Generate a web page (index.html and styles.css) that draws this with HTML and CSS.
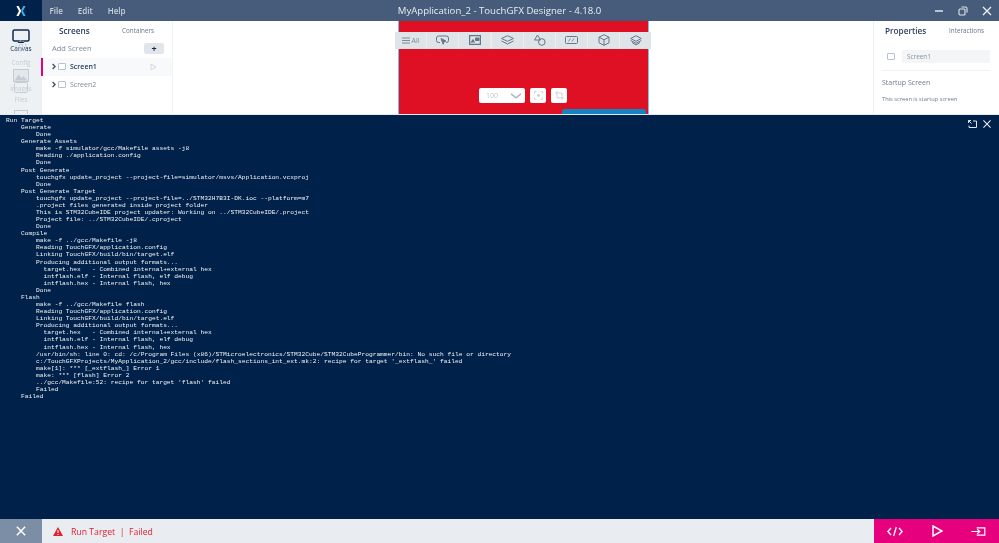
FILE: index.html
```html
<!DOCTYPE html>
<html lang="en">
<head>
<meta charset="utf-8">
<title>MyApplication_2 - TouchGFX Designer - 4.18.0</title>
<link rel="stylesheet" href="styles.css">
</head>
<body>
<div class="app">
  <header class="titlebar">
    <div class="logo">
      <svg width="10" height="12" viewBox="0 0 14 15"><path d="M0.500 0.500h3.200l3.600 7-3.600 7H0.500l3.600-7z" fill="#fff"/><path d="M13.500 0.500h-3.200l-3 5.600 1.600 2.900z" fill="#3fb4e6"/><path d="M13.500 14.500h-3.200l-3-5.600 1.600-2.900z" fill="#3fb4e6"/></svg>
    </div>
    <nav class="menu"><span>File</span><span>Edit</span><span>Help</span></nav>
    <div class="title">MyApplication_2 - TouchGFX Designer - 4.18.0</div>
    <div class="winbtns">
      <svg width="10" height="10" viewBox="0 0 10 10"><path d="M1 5h8" stroke="#dfe5ec" stroke-width="1.500"/></svg>
      <svg width="10" height="10" viewBox="0 0 10 10" fill="none" stroke="#dfe5ec" stroke-width="1.100"><rect x="1" y="3" width="6" height="6" rx="1"/><path d="M3.500 1h4a1.500 1.500 0 0 1 1.500 1.500v4"/></svg>
      <svg width="10" height="10" viewBox="0 0 10 10"><path d="M1 1l8 8M9 1l-8 8" stroke="#eef1f5" stroke-width="1.300"/></svg>
    </div>
  </header>

  <div class="workspace">
    <aside class="rail">
      <div class="rail-item active">
        <svg width="18" height="14" viewBox="0 0 18 14" fill="none" stroke="#0d2a50" stroke-width="1.500"><rect x="1" y="1" width="16" height="11" rx="1.500"/><path d="M6 13.300h6"/></svg>
        <span>Canvas</span>
      </div>
      <div class="rail-item config">
        <svg width="14" height="14" viewBox="0 0 14 14" fill="none" stroke="#c4ccd5"><circle cx="7" cy="7" r="5" stroke-dasharray="2.500 1"/><circle cx="7" cy="7" r="2"/></svg>
        <span>Config</span>
      </div>
      <div class="rail-item images">
        <svg width="16" height="13" viewBox="0 0 16 13"><rect x="0.500" y="0.500" width="15" height="12" fill="#e4e8ec" stroke="#c4ccd5"/><path d="M1.500 11.500l4-6 3 3.500 2-2 4 4.500z" fill="#c4ccd5"/></svg>
        <span>Images</span>
      </div>
      <div class="rail-item files">
        <svg width="14" height="11" viewBox="0 0 14 11" fill="none" stroke="#c4ccd5"><rect x="0.500" y="0.500" width="13" height="10" rx="1"/></svg>
        <span>Files</span>
      </div>
      <div class="rail-item more">
        <svg width="14" height="5" viewBox="0 0 14 5" fill="none" stroke="#c4ccd5"><rect x="0.500" y="0.500" width="13" height="8"/></svg>
      </div>
    </aside>

    <section class="screens">
      <div class="tabs"><span class="tab-on">Screens</span><span class="tab-off">Containers</span></div>
      <div class="add-row"><span>Add Screen</span><span class="add-btn">+</span></div>
      <div class="screen-row selected">
        <svg class="chev" width="5" height="7" viewBox="0 0 5 7" fill="none" stroke="#33475f" stroke-width="1.200"><path d="M.6 1l2.500 2.500L.6 6"/></svg>
        <span class="box"></span><span class="name">Screen1</span>
        <svg class="play" width="7" height="8" viewBox="0 0 7 8" fill="none" stroke="#d3d9e0"><path d="M1 1l5 3-5 3z"/></svg>
      </div>
      <div class="screen-row">
        <svg class="chev" width="5" height="7" viewBox="0 0 5 7" fill="none" stroke="#33475f" stroke-width="1.200"><path d="M.6 1l2.500 2.500L.6 6"/></svg>
        <span class="box"></span><span class="name">Screen2</span>
      </div>
    </section>

    <main class="canvas">
      <div class="device">
        <div class="scrollbtn"></div>
        <div class="zoombar">
          <span class="zoom-select"><span>100</span><svg width="12" height="6" viewBox="0 0 12 6" fill="none" stroke="#aeb7c2" stroke-width="1.500"><path d="M1 .8l5 4 5-4"/></svg></span>
          <span class="zoom-btn"><svg width="9" height="9" viewBox="0 0 11 11" fill="none" stroke="#c3cad3"><path d="M.5 3V.5H3M8 .5h2.500V3M10.500 8v2.500H8M3 10.500H.5V8"/><circle cx="5.500" cy="5.500" r="1.200" fill="#c3cad3"/></svg></span>
          <span class="zoom-btn"><svg width="9" height="9" viewBox="0 0 11 11" fill="none" stroke="#c3cad3"><path d="M2.500 0v8.500H11M0 2.500h8.500V11"/></svg></span>
        </div>
      </div>
      <div class="toolbar">
        <span class="tool all"><svg width="8" height="7" viewBox="0 0 8 7" stroke="#7d8a99"><path d="M0 1h8M0 3.500h8M0 6h8"/></svg>All</span>
        <span class="tool"><svg width="13" height="11" viewBox="0 0 13 11" fill="none" stroke="#66768a"><path d="M4 7.500H2.500a2 2 0 0 1-2-2V3a2 2 0 0 1 2-2h8a2 2 0 0 1 2 2v2.500a2 2 0 0 1-2 2H10"/><path d="M5 3.500l5 2.500-2 .8-.8 2.500z" fill="#66768a"/></svg></span>
        <span class="tool"><svg width="12" height="10" viewBox="0 0 12 10" fill="none" stroke="#66768a"><rect x=".5" y=".5" width="11" height="9" stroke-width="1.500"/><path d="M2 7.500l2-3 1.500 3M6.500 3h3.500v2.500H6.500z" fill="#66768a"/></svg></span>
        <span class="tool"><svg width="13" height="11" viewBox="0 0 13 11" fill="none" stroke="#66768a"><path d="M6.500.7l6 2.800-6 2.800-6-2.800z"/><path d="M.5 6l6 3 6-3"/></svg></span>
        <span class="tool"><svg width="13" height="12" viewBox="0 0 13 12" fill="none" stroke="#66768a"><path d="M4.500 1L7.500 6h-6z"/><circle cx="8.800" cy="8" r="3.300"/></svg></span>
        <span class="tool"><svg width="13" height="8" viewBox="0 0 13 8" fill="none" stroke="#66768a"><rect x=".5" y=".5" width="12" height="7" rx="1"/><path d="M3.500 5.500l2-3M7 5.500l2-3" stroke-width=".8"/></svg></span>
        <span class="tool"><svg width="12" height="12" viewBox="0 0 12 12" fill="none" stroke="#66768a"><path d="M6 .7l5 2.500v5.600l-5 2.500-5-2.500V3.200zM1 3.200l5 2.600 5-2.600M6 5.800v5.500"/></svg></span>
        <span class="tool"><svg width="12" height="11" viewBox="0 0 12 11" fill="none" stroke="#66768a"><path d="M6 .7l5.300 2.800L6 6.300.7 3.500z"/><path d="M.7 5.500L6 8.300l5.300-2.800M2 7.500L6 10l4-2.500"/></svg></span>
      </div>
    </main>

    <aside class="props">
      <div class="tabs props-tabs"><span class="tab-on">Properties</span><span class="tab-off">Interactions</span></div>
      <div class="prop-name">
        <span class="box"></span><span class="prop-input">Screen1</span>
      </div>
      <h3 class="prop-h">Startup Screen</h3>
      <p class="prop-p">This screen is startup screen</p>
    </aside>
  </div>

  <section class="console">
    <div class="console-btns">
      <svg width="9" height="8" viewBox="0 0 9 8" fill="none" stroke="#dfe5ec"><path d="M3 .5H.5V3M.5.5l3 3M5 1h3.500v6.500H1V5.500"/></svg>
      <svg width="8" height="8" viewBox="0 0 9 9"><path d="M.5.5l8 8M8.500.5l-8 8" stroke="#eef1f5" stroke-width="1.200"/></svg>
    </div>
<pre class="log">Run Target
    Generate
        Done
    Generate Assets
        make -f simulator/gcc/Makefile assets -j8
        Reading ./application.config
        Done
    Post Generate
        touchgfx update_project --project-file=simulator/msvs/Application.vcxproj
        Done
    Post Generate Target
        touchgfx update_project --project-file=../STM32H7B3I-DK.ioc --platform=m7
        .project files generated inside project folder
        This is STM32CubeIDE project updater: Working on ../STM32CubeIDE/.project
        Project file: ../STM32CubeIDE/.cproject
        Done
    Compile
        make -f ../gcc/Makefile -j8
        Reading TouchGFX/application.config
        Linking TouchGFX/build/bin/target.elf
        Producing additional output formats...
          target.hex   - Combined internal+external hex
          intflash.elf - Internal flash, elf debug
          intflash.hex - Internal flash, hex
        Done
    Flash
        make -f ../gcc/Makefile flash
        Reading TouchGFX/application.config
        Linking TouchGFX/build/bin/target.elf
        Producing additional output formats...
          target.hex   - Combined internal+external hex
          intflash.elf - Internal flash, elf debug
          intflash.hex - Internal flash, hex
        /usr/bin/sh: line 0: cd: /c/Program Files (x86)/STMicroelectronics/STM32Cube/STM32CubeProgrammer/bin: No such file or directory
        c:/TouchGFXProjects/MyApplication_2/gcc/include/flash_sections_int_ext.mk:2: recipe for target '_extflash_' failed
        make[1]: *** [_extflash_] Error 1
        make: *** [flash] Error 2
        ../gcc/Makefile:52: recipe for target 'flash' failed
        Failed
    Failed</pre>
  </section>

  <footer class="statusbar">
    <button class="close-btn" type="button" aria-label="Close"><svg width="10" height="10" viewBox="0 0 12 12"><path d="M1 1l10 10M11 1L1 11" stroke="#fff" stroke-width="1.800"/></svg></button>
    <div class="status">
      <svg width="10" height="9" viewBox="0 0 10 9"><path d="M5 0l5 9H0z" fill="#e0202f"/><path d="M5 3v3M5 7v1" stroke="#fff"/></svg>
      <span>Run Target&nbsp; |&nbsp; Failed</span>
    </div>
    <div class="actions">
      <svg width="16" height="11" viewBox="0 0 18 12" fill="none" stroke="#fff" stroke-width="1.500"><path d="M4.500 2L1 6l3.500 4M13.500 2L17 6l-3.500 4M10.500 1L7.500 11"/></svg>
      <svg width="11" height="12" viewBox="0 0 11 12" fill="none" stroke="#fff" stroke-width="1.500"><path d="M1 1l9 5-9 5z"/></svg>
      <svg width="15" height="9" viewBox="0 0 16 10" fill="none" stroke="#fff" stroke-width="1.300"><path d="M6 1h9v8H6M0 5h9M6.500 2.500L9.500 5l-3 2.500"/></svg>
    </div>
  </footer>
</div>
</body>
</html>
```

FILE: styles.css
```css
* { box-sizing: border-box; }
html, body { margin: 0; height: 100%; overflow: hidden; }
body { font-family: "Open Sans", sans-serif; color: #33475f; background: #fff; }
svg { flex: none; }

/* own compositing layer: text is antialiased in greyscale, as in the reference */
.app { display: flex; flex-direction: column; width: 999px; height: 543px; will-change: transform; }

/* Title bar */
.titlebar { position: relative; display: flex; align-items: center; flex: 0 0 21px; background: #475c7b; color: #dfe5ec; }
.logo { display: flex; align-items: center; justify-content: center; width: 42px; height: 21px; background: #00214a; }
.menu { display: flex; gap: 15px; margin-left: 7.500px; font-size: 8px; font-weight: 600; color: #c9d2dd; }
.title { position: absolute; left: 0; right: 0; text-align: center; font-size: 9.600px; font-weight: 500; color: #e8ecf1; }
.winbtns { display: flex; gap: 14px; margin-left: auto; margin-right: 7px; }

/* Workspace */
.workspace { display: flex; flex: 0 0 94px; overflow: hidden; background: #fff; border-bottom: 1px solid #e6e9ed; }

.rail { flex: 0 0 42px; display: flex; flex-direction: column; align-items: center; padding-top: 8px; background: #eef1f4; overflow: hidden; }
.rail-item { display: flex; flex-direction: column; align-items: center; flex: none; font-size: 6.400px; color: #c4ccd5; }
.rail-item span { line-height: 8px; margin-top: 3px; }
.rail-item.active { color: #0d2a50; }
.rail-item.active span { margin-top: 2px; }
.rail-item.config { margin-top: -14px; }
.rail-item.config span { margin-top: 6px; }
.rail-item.images { margin-top: 2px; }
.rail-item.files { margin-top: -11px; }
.rail-item.more { margin-top: 6px; }

.screens { flex: 0 0 130px; display: flex; flex-direction: column; background: #fff; font-size: 7.500px; }
.tabs { display: flex; align-items: center; justify-content: space-between; height: 19px; padding: 0 18px 0 17px; }
.tab-on { font-size: 8.200px; font-weight: 600; color: #2d4260; }
.tab-off { font-size: 6.300px; color: #66778c; }
.add-row { display: flex; align-items: center; justify-content: space-between; height: 18px; padding: 0 8px 2px 10px; font-size: 7.500px; color: #7a8a9c; }
.add-btn { display: flex; align-items: center; justify-content: center; width: 20px; height: 11px; background: #e2e6eb; border-radius: 2px; color: #0d2a50; font-weight: 700; font-size: 9px; line-height: 1; }
.screen-row { display: flex; align-items: center; height: 18px; padding: 0 0 1px 10px; color: #7a8a9c; }
.screen-row.selected { background: #f8f9fa; box-shadow: inset 2px 0 0 #e6007e; margin-left: -1px; padding-left: 11px; color: #24395a; font-weight: 600; }
.chev { margin-right: 1px; }
.box { display: inline-block; flex: none; width: 8px; height: 7px; border: 1px solid #b9c2cc; border-radius: 1px; background: #fff; }
.name { margin-left: 4px; font-size: 7px; }
.play { margin-left: auto; margin-right: 15px; }

/* Canvas */
.canvas { position: relative; flex: 1 1 auto; display: flex; justify-content: center; background: #fff; border-left: 1px solid #f1f3f5; }
.device { position: relative; flex: none; width: 251px; height: 94px; margin-left: 1px; background: #e01024; border-left: 1px solid #6fc3e8; border-right: 1px solid #6fc3e8; }
.scrollbtn { position: absolute; left: 163px; bottom: 1px; width: 84px; height: 5px; background: #1484c2; border-radius: 3px 3px 0 0; }
.zoombar { position: absolute; left: 80px; top: 67px; display: flex; gap: 5px; }
.zoom-select { display: flex; align-items: center; justify-content: space-between; width: 46px; height: 15px; padding: 0 3px 0 7px; background: #fff; border-radius: 2px; font-size: 7px; color: #c0c7d0; }
.zoom-btn { display: flex; align-items: center; justify-content: center; width: 16px; height: 15px; background: #fff; border-radius: 2px; }
.toolbar { position: absolute; left: 222px; top: 11px; display: flex; gap: 1.200px; padding: 0; background: #f1e9eb; }
.tool { display: flex; align-items: center; justify-content: center; width: 31px; height: 16.500px; background: #dfe4e8; }
.tool.all { gap: 2px; font-size: 7px; color: #7d8a99; }

/* Properties */
.props { flex: 0 0 126px; background: #fff; border-left: 1px solid #eef0f3; padding: 0 9px 0 8px; }
.props-tabs { padding: 0 6px 0 0; }
.props-tabs .tab-on { margin-left: 3px; }
.prop-name { display: flex; align-items: center; gap: 7px; height: 31px; padding: 2px 0 0 5px; border-bottom: 1px solid #f0f2f4; }
.prop-input { flex: 1; height: 13px; line-height: 13px; padding-left: 5px; background: #f3f5f7; color: #8593a4; font-size: 6.400px; }
.prop-h { margin: 7px 0 0; font-size: 7px; font-weight: 400; line-height: 10px; color: #6b7c90; }
.prop-p { margin: 7px 0 0; font-size: 5.700px; line-height: 8px; color: #6b7c90; }

/* Console */
.console { position: relative; flex: 1 1 auto; background: #00214a; overflow: hidden; }
.console-btns { position: absolute; right: 8px; top: 5px; display: flex; gap: 6px; }
.log { margin: 0; padding: 2px 0 0 6px; font-family: "Liberation Mono", monospace; font-size: 6.240px; line-height: 7.080px; color: #f2f4f7; white-space: pre; }

/* Status bar */
.statusbar { display: flex; flex: 0 0 24px; background: #e9edf1; }
.close-btn { flex: 0 0 42px; display: flex; align-items: center; justify-content: center; padding: 0; border: 0; background: #7b8ea5; }
.status { display: flex; align-items: center; gap: 8px; flex: 1; padding: 1px 0 0 11px; font-size: 8.700px; color: #e0202f; }
.actions { display: flex; align-items: center; justify-content: space-between; flex: 0 0 125px; padding: 0 13px; background: #e6007e; }
```
